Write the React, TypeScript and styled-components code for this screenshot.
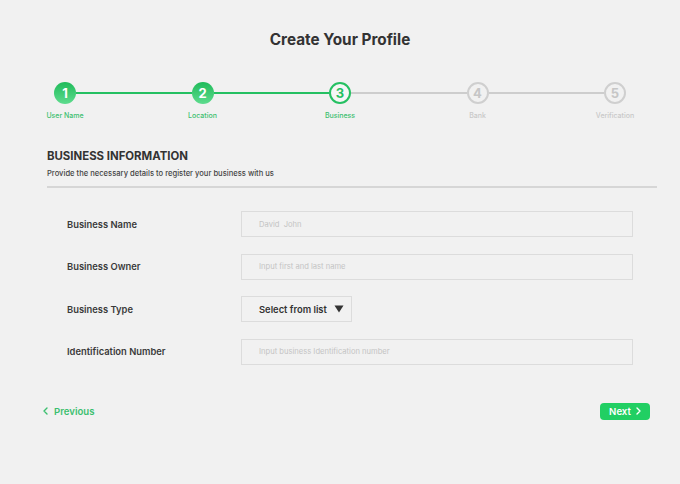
import React from "react";
import styled, { createGlobalStyle } from "styled-components";

const GlobalStyle = createGlobalStyle`
  html, body {
    margin: 0;
    padding: 0;
    background: #f1f1f1;
  }
  body {
    font-family: Inter, "Noto Sans", "Liberation Sans", sans-serif;
    color: #333;
  }
  * { box-sizing: border-box; }
`;

const Page = styled.div`
  width: 680px;
  height: 484px;
  background: #f1f1f1;
  display: flex;
  flex-direction: column;
  overflow: hidden;
`;

const Title = styled.h1`
  margin: 30px 0 0;
  height: 20px;
  line-height: 20px;
  text-align: center;
  font-size: 15.3px;
  font-weight: 700;
  color: #333;
`;

const Stepper = styled.div`
  display: flex;
  align-items: flex-start;
  padding: 0 54px;
  margin-top: 32px;
`;

const Step = styled.div`
  width: 22px;
  display: flex;
  flex-direction: column;
  align-items: center;
`;

type StepState = "done" | "active" | "todo";

const Circle = styled.div<{ $state: StepState }>`
  width: 22px;
  height: 22px;
  border-radius: 50%;
  display: flex;
  align-items: center;
  justify-content: center;
  font-size: 13px;
  font-weight: 700;
  line-height: 1;
  ${({ $state }) =>
    $state === "done"
      ? `background: linear-gradient(180deg, #1fbb5a 0%, #5edc8e 100%); color: #fff;`
      : $state === "active"
      ? `background: #f6f6f6; border: 2px solid #25c062; color: #25c062;`
      : `background: #f1f1f1; border: 2px solid #cfcfcf; color: #c6c6c6;`}
`;

const StepLabel = styled.div<{ $state: StepState }>`
  margin-top: 7px;
  white-space: nowrap;
  font-size: 7px;
  font-weight: 500;
  color: ${({ $state }) => ($state === "todo" ? "#c8c8c8" : "#3cbf6f")};
`;

const Connector = styled.div<{ $done: boolean }>`
  flex: 1;
  height: 2px;
  margin-top: 10px;
  background: ${({ $done }) => ($done ? "#25c062" : "#cdcdcd")};
`;

const Section = styled.section`
  margin: 28px 23px 0 47px;
`;

const SectionTitle = styled.h2`
  margin: 0;
  font-size: 11.4px;
  line-height: 16px;
  font-weight: 700;
  color: #333;
`;

const SectionHint = styled.p`
  margin: 4px 0 0;
  font-size: 7.6px;
  line-height: 12px;
  font-weight: 500;
  color: #444;
`;

const Divider = styled.hr`
  margin: 6px 0 0;
  border: 0;
  height: 2px;
  background: #d6d6d6;
`;

const Form = styled.div`
  margin: 23px 0 0 20px;
  width: 566px;
  display: grid;
  grid-template-columns: 174px 392px;
  row-gap: 16.5px;
  align-items: center;
`;

const FieldLabel = styled.label`
  font-size: 9.4px;
  font-weight: 600;
  color: #3a3a3a;
`;

const TextInput = styled.input`
  height: 26px;
  width: 100%;
  border: 1px solid #dcdcdc;
  background: #f1f1f1;
  padding: 0 0 0 17px;
  font-family: inherit;
  font-size: 7.6px;
  color: #333;
  outline: none;
  &::placeholder {
    color: #c4c4c4;
  }
`;

const SelectBox = styled.div`
  height: 26px;
  width: 111px;
  border: 1px solid #dcdcdc;
  display: flex;
  align-items: center;
  padding-left: 17px;
  gap: 7px;
  font-size: 9.4px;
  font-weight: 600;
  color: #333;
`;

const Footer = styled.div`
  margin: 38px 30px 0 43px;
  display: flex;
  justify-content: space-between;
  align-items: center;
`;

const PrevLink = styled.button`
  border: 0;
  background: transparent;
  padding: 0;
  display: flex;
  align-items: center;
  gap: 6px;
  font-family: inherit;
  font-size: 9.6px;
  font-weight: 600;
  color: #3cbf6f;
  cursor: pointer;
`;

const NextButton = styled.button`
  height: 17px;
  width: 50px;
  border: 0;
  border-radius: 4px;
  background: #21cf63;
  color: #fff;
  display: flex;
  align-items: center;
  justify-content: center;
  gap: 5px;
  padding: 0;
  font-family: inherit;
  font-size: 9.6px;
  font-weight: 600;
  cursor: pointer;
`;

const Chevron = ({ dir, color }: { dir: "left" | "right"; color: string }) => (
  <svg width="5" height="8" viewBox="0 0 5 8" fill="none">
    <path
      d={dir === "left" ? "M4 1 L1 4 L4 7" : "M1 1 L4 4 L1 7"}
      stroke={color}
      strokeWidth="1.4"
      strokeLinecap="round"
      strokeLinejoin="round"
    />
  </svg>
);

const Caret = () => (
  <svg width="10" height="8" viewBox="0 0 10 8">
    <path d="M0.5 0.5 H9.5 L5 7.5 Z" fill="#333" />
  </svg>
);

const steps: { label: string; state: StepState }[] = [
  { label: "User Name", state: "done" },
  { label: "Location", state: "done" },
  { label: "Business", state: "active" },
  { label: "Bank", state: "todo" },
  { label: "Verification", state: "todo" },
];

export default function App() {
  return (
    <Page>
      <GlobalStyle />
      <Title>Create Your Profile</Title>

      <Stepper>
        {steps.map((s, i) => (
          <React.Fragment key={s.label}>
            {i > 0 && <Connector $done={steps[i].state !== "todo"} />}
            <Step>
              <Circle $state={s.state}>{i + 1}</Circle>
              <StepLabel $state={s.state}>{s.label}</StepLabel>
            </Step>
          </React.Fragment>
        ))}
      </Stepper>

      <Section>
        <SectionTitle>BUSINESS INFORMATION</SectionTitle>
        <SectionHint>Provide the necessary details to register your business with us</SectionHint>
        <Divider />

        <Form>
          <FieldLabel>Business Name</FieldLabel>
          <TextInput placeholder="David  John" />

          <FieldLabel>Business Owner</FieldLabel>
          <TextInput placeholder="Input first and last name" />

          <FieldLabel>Business Type</FieldLabel>
          <SelectBox>
            Select from list
            <Caret />
          </SelectBox>

          <FieldLabel>Identification Number</FieldLabel>
          <TextInput placeholder="Input business Identification number" />
        </Form>
      </Section>

      <Footer>
        <PrevLink>
          <Chevron dir="left" color="#3cbf6f" />
          Previous
        </PrevLink>
        <NextButton>
          Next
          <Chevron dir="right" color="#fff" />
        </NextButton>
      </Footer>
    </Page>
  );
}
